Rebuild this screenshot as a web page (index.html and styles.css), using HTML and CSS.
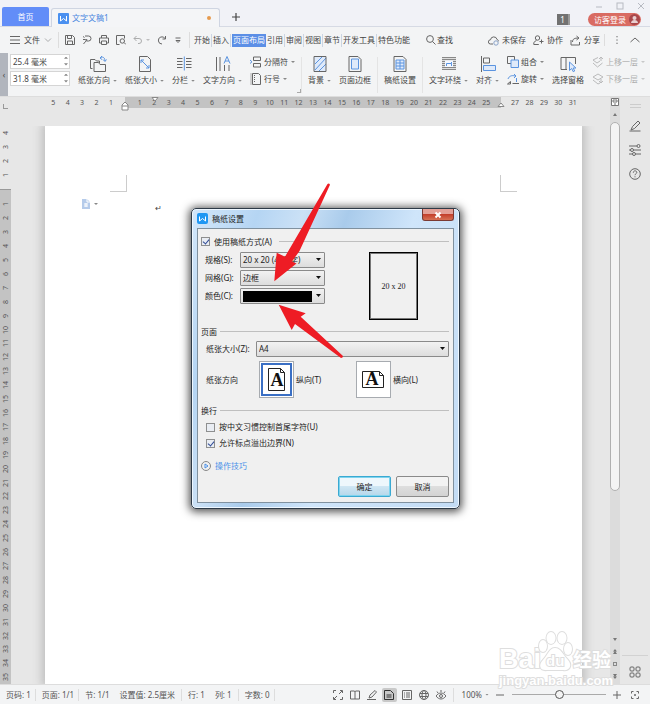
FILE: index.html
```html
<!DOCTYPE html>
<html lang="zh-CN">
<head>
<meta charset="utf-8">
<title>文字文稿1</title>
<link rel="stylesheet" href="styles.css">
</head>
<body>
<div class="app">
  <header class="titlebar">
    <button class="home-tab">首页</button>
    <div class="doc-tab">
      <svg class="i11" viewBox="0 0 11 11"><rect width="11" height="11" rx="1" fill="#4a90f0"/><path d="M2.500 3v5l3-2.500L8.500 8V3" fill="none" stroke="#fff"/></svg>
      <span>文字文稿1</span><b class="unsaved"></b>
    </div>
    <button class="new-tab" aria-label="新建"><svg class="i10" viewBox="0 0 10 10"><path d="M5 1v8M1 5h8" stroke="#444" stroke-width="1.200"/></svg></button>
    <div class="title-right">
      <span class="badge">1</span>
      <button class="login">访客登录<svg class="i11" viewBox="0 0 11 11"><circle cx="5.500" cy="5.500" r="5.500" fill="#a8474b"/><circle cx="5.500" cy="4" r="2" fill="#e9cfd0"/><path d="M2 9c0-4 7-4 7 0z" fill="#e9cfd0"/></svg></button>
    </div>
    <div class="window-buttons">
      <button aria-label="最小化"><svg class="i8" viewBox="0 0 8 8"><path d="M1 5h6"/></svg></button>
      <button aria-label="最大化"><svg class="i8" viewBox="0 0 8 8"><rect x="1" y="1" width="6" height="6"/></svg></button>
      <button aria-label="关闭"><svg class="i8" viewBox="0 0 8 8"><path d="M1 1l6 6M7 1L1 7"/></svg></button>
    </div>
  </header>

  <nav class="menubar">
    <button class="file-menu"><svg class="i10" viewBox="0 0 10 10"><path d="M0 1.500h10M0 5h10M0 8.500h10"/></svg>文件<svg class="i8 faint" viewBox="0 0 8 8"><path d="M1 2.500l3 3 3-3"/></svg></button>
    <div class="quick">
      <button aria-label="保存"><svg class="i10" viewBox="0 0 10 10"><path d="M.5.5h7l2 2v7h-9zM2.500.5v3h4v-3M2.500 9.500V6h5v3.500"/></svg></button>
      <button aria-label="输出"><svg class="i10" viewBox="0 0 10 10"><path d="M2.500 2.500L1 1.500M3 1h3.500a2.500 2.500 0 010 5H5M1 4.500h2.500c1.500 0 1.500 2 0 2L1.500 9M3.500 6.500L5 4"/></svg></button>
      <button aria-label="打印"><svg class="i10" viewBox="0 0 10 10"><path d="M2.500 3V.5h5V3M2 8H.5V3h9v5H8M2.500 6h5v3.500h-5z"/></svg></button>
      <button aria-label="打印预览"><svg class="i10" viewBox="0 0 10 10"><path d="M3.500 9.500h-3v-9h8v3M8 7.500L10 9.500"/><circle cx="6.300" cy="6" r="2.200"/></svg></button>
      <button class="faint undo" aria-label="撤销"><svg class="i10" viewBox="0 0 10 10"><path d="M3.500 1L1 3.500 3.500 6M1 3.500h5a2.500 2.500 0 010 5H5"/></svg><i class="caret"></i></button>
      <button aria-label="恢复"><svg class="i10" viewBox="0 0 10 10"><path d="M8.500 1v3h-3M8.200 3.800A3.600 3.600 0 105 9"/></svg></button>
      <button aria-label="更多"><svg class="i8" viewBox="0 0 8 8"><path d="M1.500 2h5M2 4.500h4L4 6.500z"/></svg></button>
    </div>
    <div class="tabs">
      <button>开始</button><button>插入</button><button class="active">页面布局</button><button>引用</button><button>审阅</button><button>视图</button><button>章节</button><button>开发工具</button><button>特色功能</button>
    </div>
    <button class="search"><svg class="i10" viewBox="0 0 10 10"><circle cx="4" cy="4" r="3.400"/><path d="M6.500 6.500l3 3"/></svg>查找</button>
    <div class="share">
      <button><svg class="i11" viewBox="0 0 11 11"><path d="M5 9H2.500a2 2 0 010-4.200A3.300 3.300 0 019 4.500c1 .3 1.500 1 1.500 1.800"/><circle cx="8" cy="8" r="2.200" stroke="#8aa3c8"/></svg>未保存</button>
      <button><svg class="i11" viewBox="0 0 11 11"><circle cx="4.500" cy="3" r="2.200"/><path d="M3.500 5.200L.8 7.500v2h5M6.500 6.500h4M8.500 4.500v4"/></svg>协作</button>
      <button><svg class="i11" viewBox="0 0 11 11"><path d="M1 5v5h8.500V7M2.500 7c0-3 2-4 6-4M6.500 1l2.500 2-2.500 2"/></svg>分享</button>
    </div>
    <button class="menu-end" aria-label="选项"><svg class="i10" viewBox="0 0 10 10"><path d="M5 1v1.300M5 4.400v1.300M5 7.700V9"/></svg></button>
    <button class="collapse" aria-label="收起"><svg class="i10" viewBox="0 0 10 10"><path d="M.5 7L5 3l4.500 4"/></svg></button>
  </nav>

  <section class="ribbon">
    <button class="handle" aria-label="向左">‹</button>
    <div class="margins">
      <label><input aria-label="上边距" value="25.4 毫米"><i class="spin"></i></label>
      <label><input aria-label="左边距" value="31.8 毫米"><i class="spin"></i></label>
    </div>
    <button class="tool"><svg class="i18" viewBox="0 0 18 18"><path d="M3.500 13.500h-2v-9H6l1.500 1.500h3v2"/><path d="M5 7.500h4.500l1.500 2h5.500v7H5z"/><path class="bl" d="M11 3c2.500-2 5-.5 5 3M14 4.500l2 2 1.500-2M13 1l-2 2 2 1.500"/></svg><span>纸张方向<i class="caret"></i></span></button>
    <button class="tool"><svg class="i18" viewBox="0 0 18 18"><path d="M3.500 1.500h8l3 3v12h-11z"/><path class="bl" d="M5 5l8 8M5 8V5h3M13 10v3h-3"/></svg><span>纸张大小<i class="caret"></i></span></button>
    <button class="tool"><svg class="i18" viewBox="0 0 18 18"><path d="M2 3.500h5.500M2 6.500h5.500M2 9.500h5.500M2 12.500h5.500M11 3.500h5.500M11 6.500h5.500M11 9.500h5.500M11 12.500h5.500"/><path class="bl" d="M9.300 1.500v14"/></svg><span>分栏<i class="caret"></i></span></button>
    <button class="tool"><svg class="i18" viewBox="0 0 18 18"><path d="M2.500 2v14M6 2v14M10.500 10v6M15 10v6"/><path class="bl" d="M10 8.500l3-7 3 7M11 6h4"/></svg><span>文字方向<i class="caret"></i></span></button>
    <div class="pair">
      <button><svg class="i12" viewBox="0 0 12 12"><path d="M3.500 4.500V1h7v3.500zM3.500 7.500h7V11h-7z"/><path class="bl" d="M0 4l2 1.800L0 7.500"/></svg>分隔符<i class="caret"></i></button>
      <button><svg class="i12" viewBox="0 0 12 12"><path d="M2.500.5h6l2 2v9h-8z"/><path d="M4.500 2v8M1 .5v11" stroke-dasharray="1 1"/></svg>行号<i class="caret"></i></button>
    </div>
    <i class="launcher"></i>
    <hr>
    <button class="tool"><svg class="i18" viewBox="0 0 18 18"><path class="bf" stroke="none" d="M3 2h12v14H3z"/><path class="bl" d="M4 9l7-7M4 15L15 3M8 16l7-7"/><path d="M3 1.500h12v15H3z"/></svg><span>背景<i class="caret"></i></span></button>
    <button class="tool"><svg class="i18" viewBox="0 0 18 18"><path d="M3 1.500h9l3 3v12H3z"/><path class="bl bf" d="M5.500 4h7v10h-7z"/></svg><span>页面边框</span></button>
    <hr>
    <button class="tool"><svg class="i18" viewBox="0 0 18 18"><path d="M3 1.500h9l3 3v12H3z"/><path class="bl bf" d="M5 5h8v9H5zM5 8h8M5 11h8M9 5v9"/></svg><span>稿纸设置</span></button>
    <hr>
    <button class="tool"><svg class="i18" viewBox="0 0 18 18"><path class="gf" stroke="none" d="M2 2.500h14v12H2z"/><path class="gray" d="M2 2.500h14M2 4.500h14M2 12.500h14M2 14.500h14M2 6.500h3M2 8.500h3M2 10.500h3M13 6.500h3M13 8.500h3M13 10.500h3"/><path fill="#f4f8ff" stroke="none" d="M5 5.500h8v6.500H5z"/><path class="bl" d="M6.500 11V8.500h5V11M11.500 8.500V7"/></svg><span>文字环绕<i class="caret"></i></span></button>
    <button class="tool"><svg class="i18" viewBox="0 0 18 18"><path d="M2.500 1v16M4.500 3h6v5h-6z"/><path class="bl bf" d="M4.500 10.500h12v5h-12z"/></svg><span>对齐<i class="caret"></i></span></button>
    <div class="pair">
      <button><svg class="i12" viewBox="0 0 12 12"><path d="M.5.5h7v7h-7z"/><path class="bl bf" d="M4 4h7.500v7.500H4z"/></svg>组合<i class="caret"></i></button>
      <button><svg class="i12" viewBox="0 0 12 12"><path d="M3.500 8.500v2.500H.5zM5.500 10.500H12"/><path class="bl" d="M1 6c1-3 4-4 7-3M7 1l2 2-2 2M9.500 5v4"/></svg>旋转<i class="caret"></i></button>
    </div>
    <button class="tool"><svg class="i18" viewBox="0 0 18 18"><path d="M8 14.500H2v-12h14.500V9M7 2.500v12"/><path class="bl bf" d="M10.500 7v8.500l2.200-2 1.500 3.200 1.500-.7-1.500-3h2.700z"/></svg><span>选择窗格</span></button>
    <div class="pair disabled">
      <button><svg class="i12" viewBox="0 0 12 12"><path d="M1 4l5-2.500M1 4l4 3 3-2M1 7l4.500 4 5-4M7 3l2-2 2 2M9 1v4"/></svg>上移一层<i class="caret"></i></button>
      <button><svg class="i12" viewBox="0 0 12 12"><path d="M1 4l5-3 5 3-5 3zM1 7l5 4 2-1M7 8l2 2 2-2M9 10V6"/></svg>下移一层<i class="caret"></i></button>
    </div>
  </section>

  <main class="workspace">
    <div class="editor">
      <div class="hruler">
        <div class="corner"></div>
        <div class="hlight"><i>5</i><i>4</i><i>3</i><i>2</i><i>1</i><b></b></div>
        <div class="hdark"><b></b><i>1</i><i>2</i><i>3</i><i>4</i><i>5</i><i>6</i><i>7</i><i>8</i><i>9</i><i>10</i><i>11</i><i>12</i><i>13</i><i>14</i><i>15</i><i>16</i><i>17</i><i>18</i><i>19</i><i>20</i><i>21</i><i>22</i><i>23</i><i>24</i><i>25</i><b></b>
          <svg class="mark first" viewBox="0 0 8 14"><path d="M1 8l3-3 3 3v5H1zM1 9h6" fill="#fff" stroke="#888"/></svg>
          <svg class="mark indent" viewBox="0 0 8 14"><path d="M1 .5h6L4 4z" fill="#fff" stroke="#888"/></svg>
          <svg class="mark last" viewBox="0 0 8 14"><path d="M1 9.500h6L4 6z" fill="#fff" stroke="#888"/></svg>
        </div>
        <div class="hlight"><b></b><i>27</i><i>28</i><i>29</i><i>30</i><i>31</i></div>
      </div>
      <div class="canvas">
        <div class="vruler">
          <div class="vlight"><i>4</i><i>3</i><i>2</i><i>1</i><b></b></div>
          <div class="vdark"><b></b><i>1</i><i>2</i><i>3</i><i>4</i><i>5</i><i>6</i><i>7</i><i>8</i><i>9</i><i>10</i><i>11</i><i>12</i><i>13</i><i>14</i><i>15</i><i>16</i><i>17</i><i>18</i><i>19</i><i>20</i><i>21</i><i>22</i><i>23</i><i>24</i><i>25</i><i>26</i><i>27</i><i>28</i><i>29</i><i>30</i><i>31</i><i>32</i><i>33</i><i>34</i><i>35</i></div>
        </div>
        <article class="page">
          <div class="crops"><b class="crop-left"></b><b class="crop-right"></b></div>
          <div class="para"><svg class="i10" viewBox="0 0 10 10"><path d="M1 0h5l3 3v7H1z" fill="#b5cbea" stroke="none"/><path d="M6 0v3h3M3 5h4M3 7h4M5 4v4" stroke="#fff" fill="none"/></svg><i class="caret"></i><span class="return">↵</span></div>
        </article>
      </div>
    </div>
    <div class="scroll">
      <svg class="i10" viewBox="0 0 10 10"><path d="M1.500 1.500h7v7h-7zM3 3h4v2H3zM4 7h2" fill="#fff" stroke="#777"/></svg>
      <i class="up"></i>
      <div class="thumb"></div>
      <div class="jump"><i class="down"></i><i class="up double"></i><i class="dot"></i><i class="down double"></i></div>
    </div>
    <aside class="side">
      <i class="grip"></i>
      <button aria-label="样式"><svg class="i12" viewBox="0 0 12 12"><path d="M2 10l1.500-3.500L9 1l2 2-5.500 5.500zM.5 11h11"/></svg></button>
      <button aria-label="设置"><svg class="i12" viewBox="0 0 12 12"><path d="M0 2h8M0 6h1.500M4.500 6H12M0 10h3.500M6.500 10H12"/><circle cx="9.500" cy="2" r="1.500"/><circle cx="3" cy="6" r="1.500"/><circle cx="5" cy="10" r="1.500"/></svg></button>
      <button aria-label="帮助"><svg class="i12" viewBox="0 0 12 12"><circle cx="6" cy="6" r="5.300"/><path d="M4.300 4.700c0-2.500 3.500-2.300 3.500-.3C7.800 5.800 6 5.700 6 7.200M6 8.300v1"/></svg></button>
      <button class="apps" aria-label="应用"><svg class="i12" viewBox="0 0 12 12"><rect x="1" y="1" width="4" height="4" rx="1"/><rect x="7" y="1" width="4" height="4" rx="1"/><rect x="1" y="7" width="4" height="4" rx="1"/><rect x="7" y="7" width="4" height="4" rx="1"/></svg></button>
    </aside>
  </main>

  <footer class="status">
    <span>页码: 1</span><span>页面: 1/1</span><span>节: 1/1</span><span class="plain">设置值: 2.5厘米</span><span>行: 1</span><span class="plain">列: 1</span><span class="words">字数: 0</span>
    <div class="views">
      <button aria-label="全屏"><svg class="i10" viewBox="0 0 10 10"><path d="M.5 3V.5H3M7 .5h2.500V3M9.500 7v2.500H7M3 9.500H.5V7M1 9l3-3M6 4l3-3"/></svg></button>
      <button aria-label="阅读"><svg class="i10" viewBox="0 0 10 10"><path d="M.5 1H4l1 .5L6 1h3.500v8H.5zM5 1.500V9"/></svg></button>
      <button aria-label="写作"><svg class="i10" viewBox="0 0 10 10"><path d="M2 8l1-3 5-4.500L9.500 2 5 7zM0 9.500h9"/></svg></button>
      <button class="on" aria-label="页面视图"><svg class="i10" viewBox="0 0 10 10"><path d="M.5.5h6l3 3v6h-9zM2.500 5h5M2.500 7h5"/></svg></button>
      <button aria-label="大纲"><svg class="i10" viewBox="0 0 10 10"><path d="M.5.5h9v9h-9zM2 3h1M4 3h4M2 5h1M4 5h4M2 7h1M4 7h4"/></svg></button>
      <button aria-label="网页"><svg class="i10" viewBox="0 0 10 10"><circle cx="5" cy="5" r="4.500"/><ellipse cx="5" cy="5" rx="2" ry="4.500"/><path d="M1 3.500h8M1 6.500h8"/></svg></button>
      <button aria-label="护眼"><svg class="i10" viewBox="0 0 10 10"><path d="M0 6c3-4 7-4 10 0-3 4-7 4-10 0M5 2V0M2 3L1 1.500M8 3l1-1.500"/><circle cx="5" cy="6" r="1.500"/></svg></button>
    </div>
    <button class="zoom-value">100%<i class="caret"></i></button>
    <button class="zoom-step" aria-label="缩小"><svg class="i8" viewBox="0 0 8 8"><path d="M0 4h8"/></svg></button>
    <input class="zoom-range" type="range" min="0" max="100" value="50" aria-label="缩放">
    <button class="zoom-step" aria-label="放大"><svg class="i8" viewBox="0 0 8 8"><path d="M0 4h8M4 0v8"/></svg></button>
    <button class="fit" aria-label="适合"><svg class="i8" viewBox="0 0 8 8"><path d="M.5 2.500v-2h2M5.500.5h2v2M7.500 5.500v2h-2M2.500 7.500h-2v-2M4 3v2M3 4h2"/></svg></button>
  </footer>

  <section class="dialog" role="dialog" aria-labelledby="dialog-title">
    <div class="dialog-title">
      <svg class="i11" viewBox="0 0 11 11"><rect width="11" height="11" rx="2" fill="#1f97f3"/><path d="M2.500 3.500V8l3-2.500L8.500 8V3.500" fill="none" stroke="#fff"/></svg>
      <span id="dialog-title">稿纸设置</span>
      <button class="close" aria-label="关闭"><svg class="i8" viewBox="0 0 8 8"><path d="M1.500 1.500l5 5M6.500 1.500l-5 5"/></svg></button>
    </div>
    <form class="panel">
      <div class="heading"><label class="check"><input type="checkbox" checked>使用稿纸方式(A)</label></div>
      <div class="top">
        <div class="fields">
          <label for="spec">规格(S):</label><div class="select"><select id="spec"><option>20 x 20 (400 字)</option></select></div>
          <label for="grid">网格(G):</label><div class="select"><select id="grid"><option>边框</option></select></div>
          <label for="color">颜色(C):</label><div class="select swatch"><select id="color"><option value="#000" label=" "></option></select></div>
        </div>
        <div class="preview">20 x 20</div>
      </div>
      <div class="heading">页面</div>
      <div class="size-row"><label for="size">纸张大小(Z):</label><div class="select"><select id="size"><option>A4</option></select></div></div>
      <div class="orient">
        <span class="orient-name">纸张方向</span>
        <button type="button" class="orient-button chosen" aria-labelledby="portrait"><svg viewBox="0 0 33 35"><path d="M8.500 6.500h12l4 4v18h-16z"/><path d="M20.500 6.500v4h4"/><text x="17" y="24">A</text></svg></button><span class="orient-label" id="portrait">纵向(T)</span>
        <button type="button" class="orient-button" aria-labelledby="landscape"><svg viewBox="0 0 33 35"><path d="M5.500 9.500h17l4 4v12h-21z"/><path d="M22.500 9.500v4h4"/><text x="15" y="23">A</text></svg></button><span class="orient-label" id="landscape">横向(L)</span>
      </div>
      <div class="heading">换行</div>
      <div class="checks">
        <label class="check"><input type="checkbox">按中文习惯控制首尾字符(U)</label>
        <label class="check"><input type="checkbox" checked>允许标点溢出边界(N)</label>
      </div>
      <a class="tips" href="#"><svg class="i10" viewBox="0 0 10 10"><circle cx="5" cy="5" r="4.500" stroke="#888"/><path d="M4 3l3 2-3 2z" stroke="#4a90e8"/></svg>操作技巧</a>
      <div class="actions"><button type="button" class="ok">确定</button><button type="button">取消</button></div>
    </form>
  </section>

  <svg class="arrows" viewBox="0 0 80 180" aria-hidden="true"><path d="M61.500 4q1.500-1.500 2.500.7L33.500 71 26 81.500l4.500 2L8.300 101.300 10.700 72.700l8.300 4z"/><path d="M12.700 124.700L39.700 133.300l-5 3.500L77 176q0 2-2 2L29 144l-3.300 6z"/></svg>
  <svg class="watermark" viewBox="0 0 120 60" aria-hidden="true">
    <text class="brand" x="2" y="37">Bai</text>
    <g class="paw"><ellipse cx="46" cy="15" rx="4" ry="6"/><ellipse cx="54" cy="7" rx="4.500" ry="6"/><ellipse cx="65" cy="7" rx="4.500" ry="6"/><ellipse cx="71" cy="18" rx="4" ry="6"/><path d="M58 17c6 0 8 7 13 12 5 6 1 11-5 10H50c-7 1-9-5-4-10s6-12 12-12z"/></g>
    <text class="du" x="49" y="35">du</text>
    <text class="cn" x="76" y="36">经验</text>
    <text class="url" x="2" y="54">jingyan.baidu.com</text>
  </svg>
</div>
</body>
</html>
```

FILE: styles.css
```css
* { box-sizing: border-box; }
body { margin: 0; font: 8px/12px "Noto Sans", "Noto Sans CJK SC", sans-serif; color: #444; }
button, input, select { font: inherit; color: inherit; }
button { display: flex; align-items: center; border: 0; padding: 0; background: none; white-space: nowrap; }
i, b { font-style: normal; font-weight: normal; }
svg { display: block; flex: none; fill: none; stroke: #666; }
.i8 { width: 8px; height: 8px; }
.i10 { width: 10px; height: 10px; }
.i11 { width: 11px; height: 11px; }
.i12 { width: 12px; height: 12px; }
.i18 { width: 18px; height: 18px; }
.bl { stroke: #5b94e0; }
.bf { fill: #dfeafa; }
.gf { fill: #ddd; }
.gray { stroke: #888; }
.faint { opacity: .5; }
.caret { display: inline-block; width: 4px; height: 2px; margin-left: 3px; background: #888; clip-path: polygon(0 0, 100% 0, 50% 100%); vertical-align: middle; }
.app { position: relative; display: flex; flex-direction: column; height: 100vh; overflow: hidden; background: #f3f4f5; }

.titlebar { position: relative; display: flex; flex: none; align-items: flex-end; height: 27px; padding-left: 2px; background: #f1f2f7; border-bottom: 1px solid #d6dae4; }
.home-tab { justify-content: center; width: 47px; height: 19px; background: #628df8; color: #fff; border-radius: 2px 2px 0 0; }
.doc-tab { display: flex; align-items: center; gap: 3px; width: 169px; height: 19px; margin: 0 0 -1px 2px; padding: 0 8px 0 6px; border: 1px solid #cfd5e2; border-bottom: 0; border-radius: 3px 3px 0 0; background: #f4f5f7; color: #4a86e0; }
.doc-tab svg { stroke: none; }
.unsaved { width: 4px; height: 4px; margin-left: auto; border-radius: 50%; background: #e59a4e; }
.new-tab { margin: 0 0 4px 11px; }
.title-right { display: flex; align-items: center; gap: 18px; margin-left: auto; padding-right: 9px; }
.badge { width: 13px; height: 11px; background: #717171; border-right: 2px solid #999; color: #fff; line-height: 11px; text-align: center; }
.login { gap: 3px; height: 13px; padding: 0 1px 0 6px; border-radius: 7px; background: #d96b62; color: #fff; }
.login svg { stroke: none; }
.window-buttons { position: absolute; top: 2px; right: 5px; display: flex; gap: 13px; }
.window-buttons svg { stroke: #b7bac2; }

.menubar { display: flex; flex: none; align-items: center; height: 26px; padding: 0 10px; }
.file-menu { gap: 4px; width: 49px; height: 16px; border-right: 1px solid #ddd; }
.quick { display: flex; align-items: center; gap: 7px; height: 16px; padding: 0 7px 0 6px; border-right: 1px solid #ddd; }
.tabs { display: flex; gap: 1px; padding-left: 4px; }
.tabs button { height: 13px; padding: 0 1px 0 0; border-right: 1px solid #ccd5e2; }
.tabs .active { padding: 0 1px; background: #5c8fe6; color: #fff; border: 0; }
.tabs button:last-child { border: 0; }
.search { gap: 1px; margin-left: 15px; }
.share { display: flex; gap: 7px; margin-left: auto; padding-right: 4px; border-right: 1px solid #ddd; }
.share button { gap: 3px; }
.menu-end { margin-left: 7px; }
.collapse { margin-left: 8px; }

.ribbon { display: flex; flex: none; align-items: center; gap: 8px; height: 43px; }
.handle { flex: none; justify-content: center; align-self: stretch; width: 8px; background: #b1b5bd; }
.margins { display: grid; flex: none; gap: 2px; width: 60px; margin: 0 0 10px -6px; }
.margins label { position: relative; display: block; }
.margins input { display: block; width: 100%; height: 15px; padding: 0 2px; border: 1px solid #d5d5d5; background: #fff; }
.spin { position: absolute; top: 3px; right: 2px; width: 4px; height: 9px; background: #888; clip-path: polygon(50% 0, 100% 25%, 0 25%, 0 75%, 100% 75%, 50% 100%, 0 75%, 0 25%); }
.tool { flex: none; flex-direction: column; gap: 1px; margin-bottom: 8px; }
.tool span { line-height: 12px; }
.pair { display: grid; gap: 5px; flex: none; margin-bottom: 8px; }
.pair button { gap: 2px; }
.pair .caret { margin-left: 1px; }
.launcher { align-self: flex-end; width: 4px; height: 4px; margin: 0 -6px 3px -6px; border: solid #aaa; border-width: 0 1px 1px 0; }
.ribbon hr { flex: none; width: 1px; height: 36px; margin: 0 -2px; border: 0; background: #e4e4e4; }
.disabled { opacity: .4; }

.workspace { display: flex; flex: 1; min-height: 0; background: #e7e7e7; border-top: 1px solid #ddd; }
.editor { display: flex; flex: 1; flex-direction: column; min-width: 0; }
.hruler { display: flex; flex: none; height: 11px; padding-right: 30px; color: #555; font-size: 7px; line-height: 11px; text-align: center; }
.corner { width: 5px; height: 5px; margin: 7px 38px 0 3px; border: solid #999; border-width: 0 0 1px 1px; }
.hlight, .hdark { display: flex; }
.hlight { flex: 11; }
.hdark { position: relative; flex: 52; background: #c3c3c3; }
.hruler i, .vruler i { flex: 2 1 0; }
.hruler i { width: 0; }
.hruler b, .vruler b { flex: 1 1 0; }
.mark { position: absolute; top: 0; width: 8px; height: 14px; margin-left: -4px; }
.first { left: 0; }
.indent { left: 8%; }
.last { left: 100%; }
.canvas { display: flex; flex: 1; min-height: 0; padding-right: 28px; }
.vruler { display: flex; flex: none; flex-direction: column; width: 11px; margin: 18px 34px 0 0; color: #555; font-size: 7px; line-height: 11px; text-align: center; }
.vruler i { display: flex; min-height: 0; align-items: center; justify-content: center; writing-mode: vertical-rl; transform: rotate(180deg); }
.vlight, .vdark { display: flex; flex-direction: column; min-height: 0; }
.vlight { flex: 9 1 0; }
.vdark { flex: 70 1 0; background: #c3c3c3; border-top: 1px solid #999; overflow: hidden; }
.page { flex: 1; margin-top: 18px; background: #fff; box-shadow: 0 0 9px 3px #bdbdbd; clip-path: inset(0 -14px 0 -14px); }
.crops { display: flex; justify-content: space-between; padding: 49px 65px 0; }
.crops b { width: 17px; height: 17px; border-bottom: 1px solid #ccc; }
.crop-left { border-right: 1px solid #ccc; }
.crop-right { border-left: 1px solid #ccc; }
.para { display: flex; align-items: flex-start; padding: 7px 36px; }
.para .caret { margin-top: 4px; }
.para .return { margin: 3px 0 0 57px; }
.scroll { display: flex; flex: none; flex-direction: column; align-items: center; width: 10px; background: #dcdcdc; }
.up, .down { width: 4px; height: 3px; background: #777; clip-path: polygon(50% 0, 100% 100%, 0 100%); }
.down { clip-path: polygon(0 0, 100% 0, 50% 100%); }
.up.double { height: 5px; clip-path: polygon(50% 0, 100% 50%, 60% 50%, 100% 100%, 0 100%, 40% 50%, 0 50%); }
.down.double { height: 5px; clip-path: polygon(0 0, 100% 0, 60% 50%, 100% 50%, 50% 100%, 0 50%, 40% 50%); }
.dot { width: 4px; height: 4px; border: 1px solid #888; }
.scroll > .up { margin: 6px 0; }
.thumb { flex: 37; width: 10px; border: 1px solid #b0b0b0; border-radius: 5px; background: #f4f4f4; }
.jump { display: flex; flex: 19; flex-direction: column; align-items: center; justify-content: flex-end; gap: 8px; padding-bottom: 5px; }
.side { display: flex; flex: none; flex-direction: column; align-items: center; gap: 12px; width: 30px; padding: 7px 0 6px; }
.grip { width: 11px; height: 4px; border: solid #ccc; border-width: 1px 0; }
.apps { justify-content: center; width: 26px; margin-top: auto; padding-top: 10px; border-top: 1px solid #d2d2d2; }

.status { display: flex; flex: none; align-items: center; height: 20px; padding: 0 11px 0 6px; border-top: 1px solid #ddd; color: #555; white-space: nowrap; }
.status > span { padding-right: 4px; margin-right: 6px; border-right: 1px solid #ddd; }
.status > .plain { padding-right: 6px; }
.status > span:nth-child(3), .status > span:nth-child(5) { border: 0; }
.views { display: flex; align-items: center; gap: 5px; margin-left: auto; padding-right: 6px; border-right: 1px solid #ddd; }
.views button { justify-content: center; width: 12px; height: 14px; }
.views .on { width: 15px; border-radius: 2px; background: #c9c9c9; margin: 0 -1px; }
.views .on svg { stroke: #333; }
.zoom-value { margin-left: 8px; }
.zoom-step { margin-left: 7px; }
.zoom-range { appearance: none; width: 94px; height: 10px; margin: 0 0 0 8px; background: linear-gradient(#aaa, #aaa) center / 100% 1px no-repeat; }
.zoom-range::-webkit-slider-thumb { appearance: none; width: 9px; height: 9px; border: 1px solid #555; border-radius: 50%; background: #f4f4f4; }
.fit { margin-left: 10px; }

.dialog { position: absolute; top: 208px; left: 191px; width: 269px; padding: 0 5px 5px; border: 1px solid #2d3a47; border-radius: 5px; background: linear-gradient(110deg, #d3e7fa 0, #b5d5f3 18%, #cbe1f6 30%, #a9cbeb 42%, #cfe5fa 60%, #c3dcf5 100%); box-shadow: 0 1px 8px 2px #555, inset 0 0 0 1px #eef7ff; color: #222; }
.dialog-title { display: flex; align-items: center; gap: 4px; height: 19px; }
.dialog-title svg { stroke: none; }
.close { justify-content: center; align-self: flex-start; width: 32px; height: 12px; margin-left: auto; border: 1px solid #7b3a33; border-top: 0; border-radius: 0 0 3px 3px; background: linear-gradient(#e3a097 45%, #c3402c 50%, #d77155); }
.dialog-title .close svg { stroke: #fff; stroke-width: 2px; }
.panel { display: flex; flex-direction: column; padding: 6px 4px 5px 3px; border: 1px solid #80919f; background: #f0f0f0; }
.heading { display: flex; align-items: center; gap: 3px; height: 13px; }
.heading::after { content: ""; flex: 1; height: 1px; background: #bfbfbf; }
.heading:first-child::after { margin-left: 4px; }
.check { display: flex; align-items: center; gap: 4px; }
.check input { position: relative; appearance: none; width: 9px; height: 9px; margin: 0; border: 1px solid #8e8f8f; background: #e9edf3; }
.check input:checked::after { content: ""; position: absolute; top: 0; left: 2px; width: 3px; height: 5px; border: solid #304b96; border-width: 0 1px 1px 0; transform: rotate(40deg); }
.top { display: flex; align-items: flex-start; justify-content: space-between; padding: 4px 31px 5px 4px; }
.fields { display: grid; grid-template-columns: 35px 85px; gap: 2px 0; align-items: center; }
.select { position: relative; flex: 1; }
.select select { display: block; width: 100%; height: 16px; padding: 0 2px; appearance: none; border: 1px solid #8a8a8a; border-radius: 1px; background: linear-gradient(#f2f2f2, #ddd); }
.select::after { content: ""; position: absolute; top: 6px; right: 4px; width: 5px; height: 3px; background: #111; clip-path: polygon(0 0, 100% 0, 50% 100%); pointer-events: none; }
.swatch::before { content: ""; position: absolute; top: 3px; left: 3px; width: 69px; height: 11px; background: #000; pointer-events: none; }
.preview { display: flex; align-items: center; justify-content: center; width: 49px; height: 68px; border: 1px solid #000; font: 8px "Liberation Serif", serif; box-shadow: inset 0 0 0 1px #777; }
.size-row { display: flex; align-items: center; padding: 3px 0 4px 5px; }
.size-row label { width: 50px; }
.orient { display: flex; align-items: center; padding: 0 0 0 5px; }
.orient-name { flex: none; width: 53px; }
.orient-button { flex: none; width: 35px; height: 37px; border: 1px solid #a7abb0; background: #fff; }
.orient-button svg { width: 100%; height: 100%; stroke: #222; }
.orient-button text { font: bold 18px "Liberation Serif", serif; fill: #111; stroke: none; text-anchor: middle; }
.chosen { box-shadow: inset 0 0 0 1px #fff, inset 0 0 0 3px #3a6fc4; }
.orient-label { flex: none; width: 62px; padding-left: 2px; }
.orient-label:last-child { width: auto; }
.orient + .heading { margin-top: 6px; }
.checks { display: grid; gap: 4px; padding: 4px 0 0 5px; }
.tips { display: flex; align-items: center; gap: 4px; margin-top: 11px; color: #4a90e8; text-decoration: none; }
.actions { display: flex; justify-content: flex-end; gap: 5px; margin-top: 4px; }
.actions button { justify-content: center; width: 53px; height: 21px; border: 1px solid #8a8a8a; border-radius: 2px; background: linear-gradient(#f3f3f3 45%, #dedede 50%, #d3d3d3); }
.actions .ok { border-color: #3aa9d2; background: linear-gradient(#eef7fc 45%, #cfe6f3 50%, #b5d7ea); box-shadow: inset 0 0 0 1px #7fd4ee; }

.arrows { position: absolute; top: 180px; left: 266px; width: 80px; height: 180px; fill: #ee1c24; stroke: none; pointer-events: none; }
.watermark { position: absolute; right: 33px; bottom: 13px; width: 120px; height: 60px; fill: #fff; stroke: #dedede; stroke-width: 2px; pointer-events: none; paint-order: stroke; }
.watermark text { font-family: "Liberation Sans", "Noto Sans CJK SC", sans-serif; font-weight: bold; }
.brand { font-size: 27px; }
.du { font-size: 15px; }
.cn { font-size: 19px; }
.url { font-size: 13px; }
```
